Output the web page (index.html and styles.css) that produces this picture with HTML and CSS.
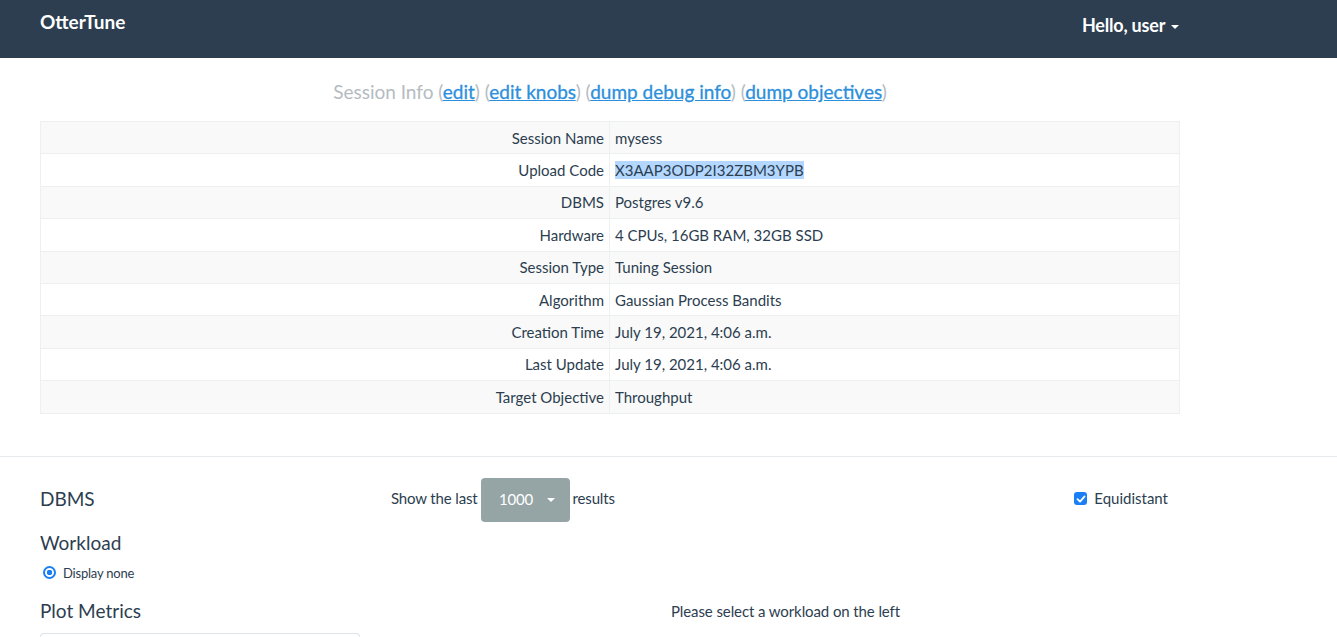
FILE: index.html
```html
<!DOCTYPE html>
<html>
<head>
<meta charset="utf-8">
<link rel="stylesheet" href="styles.css">
</head>
<body>
<nav class="navbar">
  <div class="brand">OtterTune</div>
  <div class="user">Hello, user <span class="caret"></span></div>
</nav>
<main class="top">
  <h3 class="title">Session Info (<a href="#">edit</a>) (<a href="#">edit knobs</a>) (<a href="#">dump debug info</a>) (<a href="#">dump objectives</a>)</h3>
  <table class="info">
    <tr><th>Session Name</th><td>mysess</td></tr>
    <tr><th>Upload Code</th><td><span class="sel">X3AAP3ODP2I32ZBM3YPB</span></td></tr>
    <tr><th>DBMS</th><td>Postgres v9.6</td></tr>
    <tr><th>Hardware</th><td>4 CPUs, 16GB RAM, 32GB SSD</td></tr>
    <tr><th>Session Type</th><td>Tuning Session</td></tr>
    <tr><th>Algorithm</th><td>Gaussian Process Bandits</td></tr>
    <tr><th>Creation Time</th><td>July 19, 2021, 4:06 a.m.</td></tr>
    <tr><th>Last Update</th><td>July 19, 2021, 4:06 a.m.</td></tr>
    <tr><th>Target Objective</th><td>Throughput</td></tr>
  </table>
</main>
<hr class="divider">
<section class="bottom">
  <aside class="side">
    <h4 class="side-h first">DBMS</h4>
    <h4 class="side-h">Workload</h4>
    <label class="radio"><span class="radio-dot"></span>Display none</label>
    <h4 class="side-h">Plot Metrics</h4>
    <div class="metric-box"></div>
  </aside>
  <div class="content">
    <div class="controls">
      <div class="show"><span class="lbl">Show the last</span><span class="btn"><span class="btn-txt">1000</span><span class="caret"></span></span><span class="lbl">results</span></div>
      <label class="check"><span class="checkbox"><svg width="10" height="10" viewBox="0 0 10 10"><path d="M1.5 5.2 L4 7.6 L8.6 2.4" fill="none" stroke="#fff" stroke-width="1.8" stroke-linecap="round" stroke-linejoin="round"/></svg></span><span class="lbl">Equidistant</span></label>
    </div>
    <p class="msg">Please select a workload on the left</p>
  </div>
</section>
</body>
</html>
```
FILE: styles.css
```css
html, body {
  margin: 0;
  padding: 0;
  background: #fff;
  font-family: Lato, "Open Sans", sans-serif;
  color: #2c3e50;
  font-size: 15px;
}
.navbar {
  height: 58px;
  background: #2c3e50;
  display: flex;
  justify-content: space-between;
  align-items: flex-start;
  padding: 0 0 0 40px;
  box-sizing: border-box;
}
.brand {
  color: #fff;
  font-size: 19px;
  font-weight: 700;
  padding-top: 10px;
}
.user {
  color: #fff;
  font-size: 18px;
  font-weight: 700;
  padding-top: 14px;
  margin-right: 158px;
  letter-spacing: -0.2px;
}
.caret {
  display: inline-block;
  width: 0;
  height: 0;
  border-top: 4px solid currentColor;
  border-left: 4px solid transparent;
  border-right: 4px solid transparent;
  vertical-align: middle;
  margin-left: 2px;
}
.top {
  padding: 0 40px;
  width: 1140px;
}
.title {
  margin: 0;
  padding-top: 22px;
  height: 41px;
  text-align: center;
  font-weight: 400;
  font-size: 19px;
  color: #b4bcc2;
}
.title a {
  color: #2c8fdb;
  text-decoration: underline;
  font-weight: 400;
  -webkit-text-stroke: 0.3px #2c8fdb;
}
.info {
  width: 1140px;
  border-collapse: collapse;
  border: 1px solid #ecf0f1;
}
.info tr { height: 32.4px; }
.info tr:nth-child(odd) { background: #f9f9f9; }
.info th, .info td {
  border: 1px solid #ecf0f1;
  padding: 0 5px;
  font-size: 15px;
  line-height: 20px;
}
.info th {
  width: 558px;
  text-align: right;
  font-weight: 400;
}
.info td { text-align: left; }
.sel { background: #b3d7fe; }
.divider {
  border: 0;
  border-top: 1px solid #e6eaec;
  margin: 42px 0 0 0;
}
.bottom {
  display: flex;
  padding: 0 0 0 40px;
}
.side { width: 320px; }
.side-h {
  margin: 0;
  font-size: 19px;
  font-weight: 400;
  line-height: 24px;
}
.side-h.first { margin-top: 30px; margin-bottom: 20px; }
.radio {
  display: flex;
  align-items: center;
  font-size: 13px;
  margin: 10px 0 18px 3px;
  letter-spacing: -0.2px;
}
.radio-dot {
  border-radius: 50%;
  border: 2px solid #1a7ef5;
  box-sizing: border-box;
  background: radial-gradient(circle, #1a7ef5 0 2.5px, #fff 3px);
  margin-right: 7px;
  width: 13px;
  height: 13px;
}
.metric-box {
  margin-top: 10px;
  height: 12px;
  border: 1px solid #dce4ec;
  border-bottom: 0;
  border-radius: 4px 4px 0 0;
}
.content {
  flex: 1;
  letter-spacing: -0.1px;
}
.controls {
  display: flex;
  align-items: center;
  margin-top: 21px;
  padding-left: 31px;
}
.lbl {
  margin-bottom: 4px;
}
.show {
  display: flex;
  align-items: center;
  letter-spacing: -0.15px;
}
.btn {
  display: inline-flex;
  align-items: center;
  justify-content: center;
  gap: 14px;
  background: #95a5a6;
  color: #fff;
  border-radius: 4px;
  width: 89px;
  height: 44px;
  margin: 0 3px 0 3px;
  box-sizing: border-box;
  padding-left: 4px;
}
.btn-txt { margin-bottom: 1px; }
.btn .caret { margin-left: 0; }
.check {
  display: flex;
  align-items: center;
  margin-left: auto;
  margin-right: 169px;
  letter-spacing: 0;
}
.checkbox {
  width: 13px;
  height: 13px;
  border-radius: 3px;
  background: #1a7ef5;
  display: inline-flex;
  align-items: center;
  justify-content: center;
  margin-right: 7px;
  margin-bottom: 2px;
}
.msg {
  margin: 80px 0 0 311px;
  font-size: 15px;
}
```
